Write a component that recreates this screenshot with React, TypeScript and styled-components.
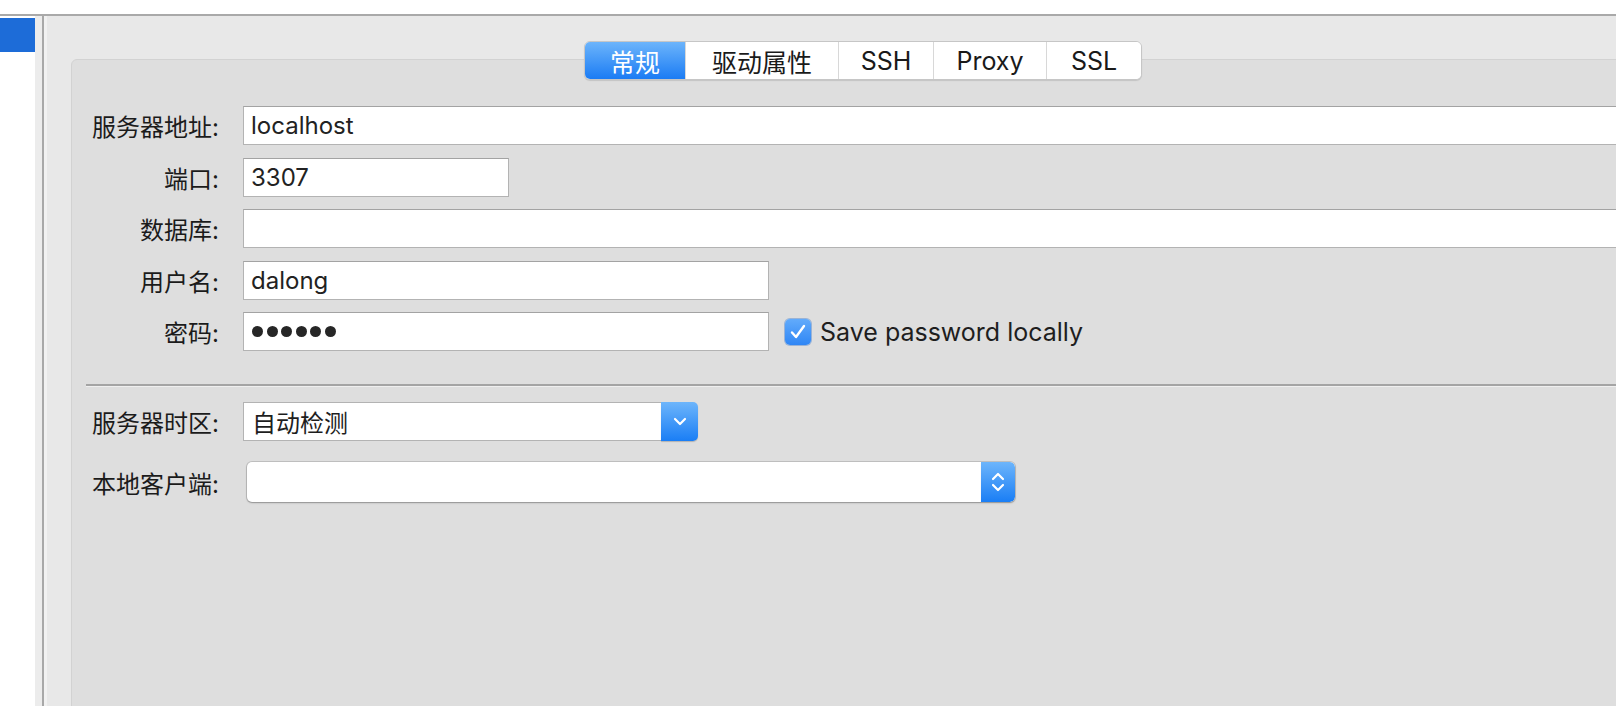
import styled, { createGlobalStyle } from "styled-components";

const GlobalStyle = createGlobalStyle`
  html, body {
    margin: 0;
    padding: 0;
    background: #fff;
    overflow: hidden;
  }
  body {
    font-family: Inter, "Noto Sans CJK SC", sans-serif;
    color: #1d1d1d;
  }
`;

const Window = styled.div`
  width: 1616px;
  height: 706px;
  display: flex;
  flex-direction: column;
  overflow: hidden;
  background: #fff;
`;

const TitleStrip = styled.div`
  height: 14px;
  flex: none;
  background: #fff;
  border-bottom: 2px solid #a9a9a9;
`;

const Body = styled.div`
  display: flex;
  flex: 1;
  min-height: 0;
`;

const Sidebar = styled.div`
  width: 35px;
  flex: none;
  background: #fff;
  padding-top: 2px;
`;

const SidebarItem = styled.div<{ $active?: boolean }>`
  height: 34px;
  background: ${(p) => (p.$active ? "#1d6cd8" : "transparent")};
`;

const Splitter = styled.div`
  width: 7px;
  flex: none;
  background: #ececec;
  border-right: 2px solid #a8a8a8;
`;

const Main = styled.div`
  flex: 1;
  min-width: 0;
  background: #e8e8e8;
  border-left: 3px solid #f1f1f1;
  padding: 43px 0 0 24px;
  overflow: hidden;
`;

const Box = styled.div`
  width: 1584px;
  min-height: 700px;
  box-sizing: border-box;
  background: #dedede;
  border: 1px solid #d2d2d2;
  border-radius: 6px;
  display: flex;
  flex-direction: column;
`;

const TabBar = styled.div`
  align-self: center;
  margin-top: -19px;
  display: flex;
  background: #fff;
  border: 1px solid #c6c6c6;
  border-radius: 6px;
  overflow: hidden;
  box-shadow: 0 1px 1px rgba(0, 0, 0, 0.12);
`;

const Tab = styled.div<{ $active?: boolean; $width: number }>`
  width: ${(p) => p.$width}px;
  height: 37px;
  display: flex;
  align-items: center;
  justify-content: center;
  font-size: 25px;
  color: ${(p) => (p.$active ? "#fff" : "#1a1a1a")};
  background: ${(p) =>
    p.$active ? "linear-gradient(#6cb4fb, #1b7cf4)" : "#fff"};
  & + & {
    border-left: 1px solid #d8d8d8;
  }
`;

const Form = styled.div`
  display: grid;
  grid-template-columns: 128px 1fr;
  column-gap: 24px;
  row-gap: 12.5px;
  padding: 26px 20px 0 19px;
  align-items: center;
`;

const Label = styled.div`
  font-size: 24px;
  text-align: right;
  white-space: nowrap;
  color: #1b1b1b;
`;

const FieldRow = styled.div`
  display: flex;
  align-items: center;
`;

const TextField = styled.div<{ $width?: number }>`
  ${(p) => (p.$width ? `width: ${p.$width}px;` : "flex: 1;")}
  height: 39px;
  box-sizing: border-box;
  background: #fff;
  border: 1px solid #b3b3b3;
  border-top-color: #a3a3a3;
  padding-left: 7px;
  display: flex;
  align-items: center;
  font-size: 24px;
  color: #222;
`;

const Dots = styled.div`
  display: flex;
  gap: 3.5px;
  padding-left: 1px;
`;

const Dot = styled.span`
  width: 11px;
  height: 11px;
  border-radius: 50%;
  background: #262626;
`;

const CheckLabel = styled.label`
  display: flex;
  align-items: center;
  gap: 9px;
  margin-left: 16px;
  font-size: 25px;
  color: #1e1e1e;
`;

const CheckBox = styled.span`
  width: 26px;
  height: 26px;
  border-radius: 5px;
  background: linear-gradient(#62abfb, #2f86f5);
  box-shadow: 0 0 0 1px rgba(30, 100, 200, 0.35);
  display: flex;
  align-items: center;
  justify-content: center;
  margin-top: 1px;
`;

const Separator = styled.div`
  height: 2px;
  margin: 33px 0 0 14px;
  background: #a4a4a4;
  border-bottom: 1px solid #efefef;
`;

const LowerForm = styled(Form)`
  padding-top: 15px;
  row-gap: 21px;
`;

const ComboBox = styled.div<{ $width: number }>`
  width: ${(p) => p.$width}px;
  height: 39px;
  display: flex;
`;

const ComboField = styled.div`
  flex: 1;
  box-sizing: border-box;
  background: #fff;
  border: 1px solid #b3b3b3;
  border-right: none;
  padding-left: 8px;
  display: flex;
  align-items: center;
  font-size: 24px;
  color: #1e1e1e;
`;

const BlueButton = styled.div<{ $width: number }>`
  width: ${(p) => p.$width}px;
  flex: none;
  border-radius: 0 5px 5px 0;
  background: linear-gradient(#6db5fb, #1a7ef5);
  box-shadow: 0 1px 1px rgba(0, 0, 0, 0.2);
  display: flex;
  align-items: center;
  justify-content: center;
`;

const PopupButton = styled.div<{ $width: number }>`
  width: ${(p) => p.$width}px;
  height: 40px;
  margin-left: 4px;
  display: flex;
  border-radius: 5px;
  overflow: hidden;
  background: #fff;
  box-shadow: 0 0 0 1px rgba(0, 0, 0, 0.13), 0 1px 2px rgba(0, 0, 0, 0.25);
`;

const PopupBody = styled.div`
  flex: 1;
`;

const ChevronDown = () => (
  <svg width="14" height="9" viewBox="0 0 14 9">
    <path d="M2 2l5 5 5-5" fill="none" stroke="#fff" strokeWidth="2.2" strokeLinecap="round" strokeLinejoin="round" />
  </svg>
);

const UpDown = () => (
  <svg width="14" height="24" viewBox="0 0 14 24">
    <path d="M2 9l5-5 5 5M2 15l5 5 5-5" fill="none" stroke="#fff" strokeWidth="2.2" strokeLinecap="round" strokeLinejoin="round" />
  </svg>
);

const CheckMark = () => (
  <svg width="18" height="16" viewBox="0 0 18 16">
    <path d="M3 8.5l4 4.5 8-11" fill="none" stroke="#fff" strokeWidth="2.4" strokeLinecap="round" strokeLinejoin="round" />
  </svg>
);

const tabs = [
  { name: "常规", width: 100 },
  { name: "驱动属性", width: 152 },
  { name: "SSH", width: 94 },
  { name: "Proxy", width: 112 },
  { name: "SSL", width: 94 },
];

export default function App() {
  return (
    <>
      <GlobalStyle />
      <Window>
        <TitleStrip />
        <Body>
          <Sidebar>
            <SidebarItem $active />
          </Sidebar>
          <Splitter />
          <Main>
            <Box>
              <TabBar>
                {tabs.map((t, i) => (
                  <Tab key={t.name} $width={t.width} $active={i === 0}>
                    {t.name}
                  </Tab>
                ))}
              </TabBar>

              <Form>
                <Label>服务器地址:</Label>
                <FieldRow>
                  <TextField>localhost</TextField>
                </FieldRow>

                <Label>端口:</Label>
                <FieldRow>
                  <TextField $width={266}>3307</TextField>
                </FieldRow>

                <Label>数据库:</Label>
                <FieldRow>
                  <TextField />
                </FieldRow>

                <Label>用户名:</Label>
                <FieldRow>
                  <TextField $width={526}>dalong</TextField>
                </FieldRow>

                <Label>密码:</Label>
                <FieldRow>
                  <TextField $width={526}>
                    <Dots>
                      {Array.from({ length: 6 }).map((_, i) => (
                        <Dot key={i} />
                      ))}
                    </Dots>
                  </TextField>
                  <CheckLabel>
                    <CheckBox>
                      <CheckMark />
                    </CheckBox>
                    Save password locally
                  </CheckLabel>
                </FieldRow>
              </Form>

              <Separator />

              <LowerForm>
                <Label>服务器时区:</Label>
                <FieldRow>
                  <ComboBox $width={455}>
                    <ComboField>自动检测</ComboField>
                    <BlueButton $width={37}>
                      <ChevronDown />
                    </BlueButton>
                  </ComboBox>
                </FieldRow>

                <Label>本地客户端:</Label>
                <FieldRow>
                  <PopupButton $width={768}>
                    <PopupBody />
                    <BlueButton $width={34}>
                      <UpDown />
                    </BlueButton>
                  </PopupButton>
                </FieldRow>
              </LowerForm>
            </Box>
          </Main>
        </Body>
      </Window>
    </>
  );
}
